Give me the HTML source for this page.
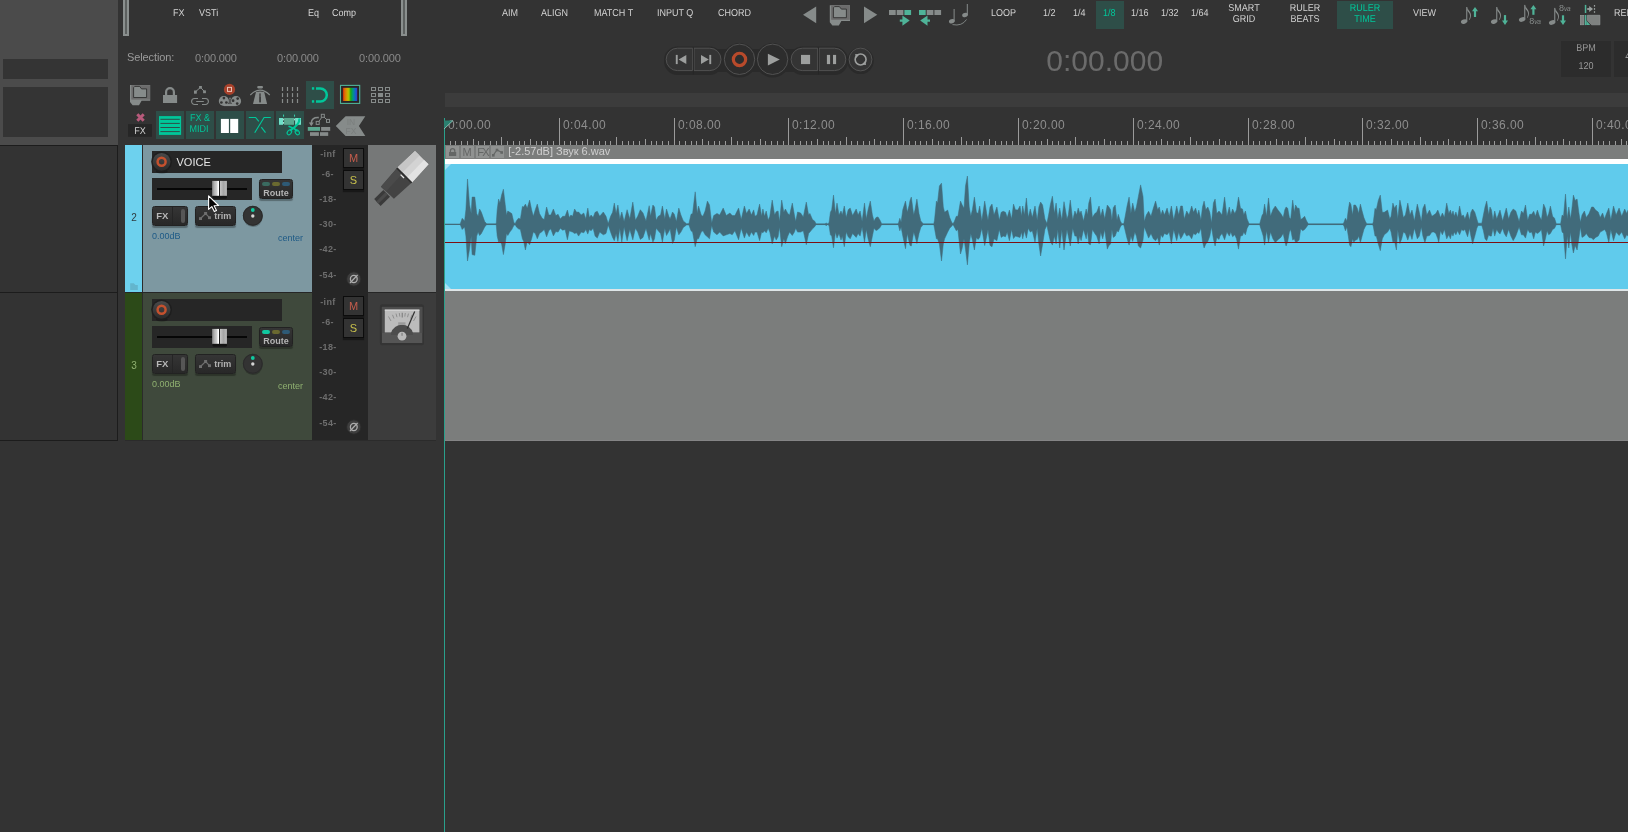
<!DOCTYPE html>
<html><head><meta charset="utf-8">
<style>
*{box-sizing:border-box;margin:0;padding:0}
html,body{width:1628px;height:832px;overflow:hidden;background:#333333;font-family:"Liberation Sans",sans-serif;}
.a{position:absolute}
.t{position:absolute;white-space:nowrap;line-height:1}
svg{position:absolute;overflow:visible}
</style></head><body>
<div id="root" class="a" style="left:0;top:0;width:1628px;height:832px;background:#333333;overflow:hidden;will-change:transform">

<!-- 10_left.py -->
<div class="a" style="left:0px;top:0px;width:118px;height:145px;background:#4b4b4b;"></div>
<div class="a" style="left:3px;top:59px;width:105px;height:20px;background:#343434;"></div>
<div class="a" style="left:3px;top:87px;width:105px;height:50px;background:#343434;"></div>
<div class="a" style="left:0px;top:145px;width:118px;height:1px;background:#1c1c1c;"></div>
<div class="a" style="left:117px;top:145px;width:1px;height:296px;background:#1c1c1c;"></div>
<div class="a" style="left:0px;top:292px;width:118px;height:1px;background:#1c1c1c;"></div>
<div class="a" style="left:0px;top:440px;width:118px;height:1px;background:#1c1c1c;"></div>
<div class="a" style="left:123px;top:0px;width:6px;height:36px;background:#8a8f8e;"></div>
<div class="a" style="left:125px;top:0px;width:2px;height:34px;background:#5c605f;"></div>
<div class="a" style="left:401px;top:0px;width:6px;height:36px;background:#8a8f8e;"></div>
<div class="a" style="left:403px;top:0px;width:2px;height:34px;background:#5c605f;"></div>
<div class="t" style="left:173px;top:9px;font-size:10px;color:#d6d6d6;text-rendering:geometricPrecision;transform:scaleX(0.9);transform-origin:0 0;">FX</div>
<div class="t" style="left:199px;top:9px;font-size:10px;color:#d6d6d6;text-rendering:geometricPrecision;transform:scaleX(0.9);transform-origin:0 0;">VSTi</div>
<div class="t" style="left:308px;top:9px;font-size:10px;color:#d6d6d6;text-rendering:geometricPrecision;transform:scaleX(0.9);transform-origin:0 0;">Eq</div>
<div class="t" style="left:332px;top:9px;font-size:10px;color:#d6d6d6;text-rendering:geometricPrecision;transform:scaleX(0.9);transform-origin:0 0;">Comp</div>
<div class="t" style="left:127px;top:52px;font-size:11px;color:#9a9a9a;letter-spacing:-0.11px">Selection:</div>
<div class="t" style="left:195px;top:53px;font-size:11px;color:#8a8a8a;letter-spacing:-0.12px">0:00.000</div>
<div class="t" style="left:277px;top:53px;font-size:11px;color:#8a8a8a;letter-spacing:-0.12px">0:00.000</div>
<div class="t" style="left:359px;top:53px;font-size:11px;color:#8a8a8a;letter-spacing:-0.12px">0:00.000</div>
<!-- 20_icons.py -->
<div class="a" style="left:306px;top:81px;width:28px;height:28px;background:#2e4e48;"></div>
<div class="a" style="left:156px;top:111px;width:28px;height:28px;background:#2e4e48;"></div>
<div class="a" style="left:186px;top:111px;width:28px;height:28px;background:#2e4e48;"></div>
<div class="a" style="left:216px;top:111px;width:28px;height:28px;background:#2e4e48;"></div>
<div class="a" style="left:246px;top:111px;width:28px;height:28px;background:#2e4e48;"></div>
<div class="a" style="left:276px;top:111px;width:28px;height:28px;background:#2e4e48;"></div>
<svg style="left:0px;top:0px" width="1628" height="832" viewBox="0 0 1628 832" ><path d="M130 85 H150.2 V100.8 H141.6 L139 105.2 H132.6 L130 102 Z" fill="#868b8a"/><rect x="131.3" y="85.2" width="18.7" height="14.4" fill="#6c6c6c"/><path d="M133.6 97.5 V87.6 L134.8 86.4 H139.6 L141.6 88.9 H146.6 V97.5 Z" fill="#868b8a" stroke="#303030" stroke-width="0.9"/><rect x="163" y="95" width="14.1" height="8" fill="#868b8a"/><path d="M166.1 95.5 V92 a3.9 3.9 0 0 1 7.8 0 V95.5" fill="none" stroke="#868b8a" stroke-width="2.2"/><path d="M195.3 92 L200.5 87.3 L204.5 91.7" fill="none" stroke="#868b8a" stroke-width="1"/><rect x="199.1" y="86" width="2.8" height="2.7" fill="#868b8a"/><rect x="194" y="90.5" width="2.8" height="3.2" fill="#868b8a"/><rect x="203.1" y="90.4" width="2.8" height="2.8" fill="#868b8a"/><path d="M198 98.5 H194.6 a3 3 0 0 0 0 6 H198 M202 98.5 H205.4 a3 3 0 0 1 0 6 H202 M196.2 101.5 H203.8" fill="none" stroke="#868b8a" stroke-width="1.1"/><circle cx="229.5" cy="89.4" r="5.6" fill="#a8412b"/><rect x="227.5" y="87.4" width="4" height="4" fill="none" stroke="#e9c2b6" stroke-width="1"/><circle cx="223.9" cy="101" r="5.1" fill="#868b8a"/><circle cx="236" cy="101" r="5.1" fill="#868b8a"/><rect x="223.9" y="103.9" width="12.1" height="2.2" fill="#868b8a"/><rect x="229.6" y="98.2" width="0.8" height="6" fill="#868b8a"/><rect x="229" y="97.8" width="2" height="0.7" fill="#868b8a"/><circle cx="223.9" cy="98.1" r="1.35" fill="#333"/><circle cx="226.4" cy="102.5" r="1.35" fill="#333"/><circle cx="221.4" cy="102.5" r="1.35" fill="#333"/><circle cx="237.7" cy="98.6" r="1.35" fill="#333"/><circle cx="237.2" cy="103.6" r="1.35" fill="#333"/><circle cx="233.1" cy="100.7" r="1.35" fill="#333"/><rect x="257.2" y="86" width="5.8" height="2.4" rx="1.1" fill="#868b8a"/><path d="M250.3 95 Q260 85.2 269.8 95" fill="none" stroke="#868b8a" stroke-width="1.1"/><path d="M256 92 Q260 90.8 264.2 92 L267.1 103.9 H253 Z" fill="#868b8a"/><rect x="259.3" y="93.6" width="1.5" height="8.8" fill="#2c2c2c"/><rect x="259.3" y="93.6" width="1.5" height="3.5" fill="#555"/><rect x="281.9" y="87.0" width="1.2" height="4" fill="#868b8a"/><rect x="281.9" y="93.1" width="1.2" height="4" fill="#868b8a"/><rect x="281.9" y="99.0" width="1.2" height="4" fill="#868b8a"/><rect x="286.9" y="87.0" width="1.2" height="4" fill="#868b8a"/><rect x="286.9" y="93.1" width="1.2" height="4" fill="#868b8a"/><rect x="286.9" y="99.0" width="1.2" height="4" fill="#868b8a"/><rect x="291.9" y="87.0" width="1.2" height="4" fill="#868b8a"/><rect x="291.9" y="93.1" width="1.2" height="4" fill="#868b8a"/><rect x="291.9" y="99.0" width="1.2" height="4" fill="#868b8a"/><rect x="296.9" y="87.0" width="1.2" height="4" fill="#868b8a"/><rect x="296.9" y="93.1" width="1.2" height="4" fill="#868b8a"/><rect x="296.9" y="99.0" width="1.2" height="4" fill="#868b8a"/><rect x="311.9" y="87.2" width="2.3" height="2.5" fill="#00c79a"/><rect x="311.9" y="100.2" width="2.3" height="2.5" fill="#00c79a"/><path d="M316 88.45 H320.3 a6.5 6.5 0 0 1 0 13 H316" fill="none" stroke="#00c79a" stroke-width="2.5"/><defs><linearGradient id="spec" x1="0" x2="1" y1="0" y2="0"><stop offset="0" stop-color="#c82810"/><stop offset="0.12" stop-color="#e06a05"/><stop offset="0.3" stop-color="#d0a800"/><stop offset="0.42" stop-color="#a8c400"/><stop offset="0.55" stop-color="#18a818"/><stop offset="0.72" stop-color="#00948c"/><stop offset="0.88" stop-color="#1860c8"/><stop offset="1" stop-color="#3838d0"/></linearGradient></defs><rect x="340.5" y="85.4" width="19.2" height="18" fill="#2b2224" stroke="#4fb398" stroke-width="1.1"/><rect x="342.9" y="87.8" width="14.3" height="13.2" fill="url(#spec)"/><rect x="371.5" y="87.5" width="4" height="3" fill="none" stroke="#868b8a" stroke-width="1"/><rect x="371.5" y="93.5" width="4" height="3" fill="none" stroke="#868b8a" stroke-width="1"/><rect x="371.5" y="99.5" width="4" height="3" fill="none" stroke="#868b8a" stroke-width="1"/><rect x="378.5" y="87.5" width="4" height="3" fill="none" stroke="#868b8a" stroke-width="1"/><rect x="378" y="93" width="5" height="4" fill="#868b8a"/><rect x="378.5" y="99.5" width="4" height="3" fill="none" stroke="#868b8a" stroke-width="1"/><rect x="385.5" y="87.5" width="4" height="3" fill="none" stroke="#868b8a" stroke-width="1"/><rect x="385.5" y="93.5" width="4" height="3" fill="none" stroke="#868b8a" stroke-width="1"/><rect x="385.5" y="99.5" width="4" height="3" fill="none" stroke="#868b8a" stroke-width="1"/><path d="M137.3 114.3 L143.7 120.7 M143.7 114.3 L137.3 120.7" stroke="#b85a7b" stroke-width="3" fill="none"/><rect x="128" y="124.1" width="24" height="12.7" fill="#262626"/><rect x="159" y="116.1" width="22.1" height="18.8" fill="#00c79a"/><rect x="160.4" y="118.8" width="19.4" height="1" fill="#2e4e48"/><rect x="160.4" y="122.9" width="19.4" height="1" fill="#2e4e48"/><rect x="160.4" y="127.0" width="19.4" height="1" fill="#2e4e48"/><rect x="160.4" y="131.1" width="19.4" height="1" fill="#2e4e48"/><rect x="220.9" y="118.9" width="8" height="14.1" fill="#ffffff"/><rect x="230.2" y="118.9" width="8" height="14.1" fill="#ffffff"/><path d="M248.8 117.5 H255.6 L258.8 121.4 M261.3 127.2 L265.5 132.7 M270.8 117.5 H264.1 L254.7 132.7" fill="none" stroke="#00c79a" stroke-width="1.15"/><rect x="279" y="118" width="4" height="6.8" fill="#6fe0c9"/><rect x="284.1" y="118" width="9.9" height="6.8" fill="#5aa890"/><rect x="295.1" y="118" width="5.9" height="6.8" fill="#6fe0c9"/><path d="M283.55 114.6 V116.7 M294.55 114.6 V116.7" stroke="#38d4b0" stroke-width="1" fill="none"/><path d="M283.55 118.6 V120.4 M283.55 122 V123.8 M294.55 118.6 V120.4" stroke="#bff3e8" stroke-width="0.9" fill="none"/><path d="M299.3 119.3 C299.6 123 296 126.5 290.5 130.2" fill="none" stroke="#00c79a" stroke-width="2.2" stroke-linecap="round"/><path d="M289.2 126.5 C292.5 127.6 295.5 129.3 297 130.8" fill="none" stroke="#00c79a" stroke-width="1.8" stroke-linecap="round"/><ellipse cx="289.4" cy="132.3" rx="1.9" ry="2.7" transform="rotate(38 289.4 132.3)" fill="none" stroke="#00c79a" stroke-width="1.1"/><ellipse cx="297.3" cy="132.4" rx="1.9" ry="2.6" transform="rotate(-32 297.3 132.4)" fill="none" stroke="#00c79a" stroke-width="1.1"/><path d="M318.8 117.6 C313.8 117.2 311.2 119.5 311.3 123" fill="none" stroke="#868b8a" stroke-width="1.6"/><path d="M308.8 122.6 L311.3 126.2 L313.8 122.6 Z" fill="#868b8a"/><path d="M317.9 122.8 L322.8 115.9 L328 120.9" fill="none" stroke="#868b8a" stroke-width="1"/><rect x="321.3" y="114.3" width="3" height="3" fill="#333" stroke="#868b8a" stroke-width="1"/><rect x="316.2" y="121.4" width="3" height="3" fill="#333" stroke="#868b8a" stroke-width="1"/><rect x="326.5" y="119.4" width="3" height="3" fill="#333" stroke="#868b8a" stroke-width="1"/><rect x="307.8" y="127" width="12.2" height="3.8" fill="#5aa890"/><rect x="321.1" y="127" width="9.1" height="3.8" fill="#868b8a"/><rect x="310" y="132.2" width="8.9" height="3.7" fill="#868b8a"/><rect x="320" y="132.2" width="8.2" height="3.7" fill="#868b8a"/><path d="M335.8 126 L345.6 116.3 H365.3 L358.9 126 L365.3 136 H345.6 Z" fill="#868b8a"/></svg>
<div class="t" style="left:140px;top:127px;width:200px;margin-left:-100px;text-align:center;font-size:10px;color:#d2d2d2;text-rendering:geometricPrecision;transform:scaleX(0.9);transform-origin:50% 0;">FX</div>
<div class="t" style="left:200px;top:114.1px;width:200px;margin-left:-100px;text-align:center;font-size:10px;color:#00c79a;text-rendering:geometricPrecision;transform:scaleX(0.9);transform-origin:50% 0;">FX &amp;</div>
<div class="t" style="left:199.4px;top:125px;width:200px;margin-left:-100px;text-align:center;font-size:10px;color:#00c79a;text-rendering:geometricPrecision;transform:scaleX(0.9);transform-origin:50% 0;">MIDI</div>
<div class="t" style="left:351px;top:118.3px;width:200px;margin-left:-100px;text-align:center;font-size:8.5px;color:#7a7e7d;">IN</div>
<div class="t" style="left:351px;top:127.2px;width:200px;margin-left:-100px;text-align:center;font-size:8.5px;color:#7a7e7d;">FX</div>
<!-- 30_topbar.py -->
<div class="t" style="left:501.6px;top:9px;font-size:10px;color:#d2d2d2;text-rendering:geometricPrecision;transform:scaleX(0.9);transform-origin:0 0;">AIM</div>
<div class="t" style="left:540.7px;top:9px;font-size:10px;color:#d2d2d2;text-rendering:geometricPrecision;transform:scaleX(0.9);transform-origin:0 0;">ALIGN</div>
<div class="t" style="left:594.4px;top:9px;font-size:10px;color:#d2d2d2;text-rendering:geometricPrecision;transform:scaleX(0.9);transform-origin:0 0;">MATCH T</div>
<div class="t" style="left:656.6px;top:9px;font-size:10px;color:#d2d2d2;text-rendering:geometricPrecision;transform:scaleX(0.9);transform-origin:0 0;">INPUT Q</div>
<div class="t" style="left:718.4px;top:9px;font-size:10px;color:#d2d2d2;text-rendering:geometricPrecision;transform:scaleX(0.9);transform-origin:0 0;">CHORD</div>
<div class="t" style="left:991.4px;top:9px;font-size:10px;color:#d2d2d2;text-rendering:geometricPrecision;transform:scaleX(0.9);transform-origin:0 0;">LOOP</div>
<div class="t" style="left:1043.2px;top:9px;font-size:10px;color:#d2d2d2;text-rendering:geometricPrecision;transform:scaleX(0.9);transform-origin:0 0;">1/2</div>
<div class="t" style="left:1073.2px;top:9px;font-size:10px;color:#d2d2d2;text-rendering:geometricPrecision;transform:scaleX(0.9);transform-origin:0 0;">1/4</div>
<div class="a" style="left:1096px;top:1px;width:28px;height:28px;background:#2e4e48;"></div>
<div class="t" style="left:1103px;top:9px;font-size:10px;color:#00c79a;text-rendering:geometricPrecision;transform:scaleX(0.9);transform-origin:0 0;">1/8</div>
<div class="t" style="left:1131px;top:9px;font-size:10px;color:#d2d2d2;text-rendering:geometricPrecision;transform:scaleX(0.9);transform-origin:0 0;">1/16</div>
<div class="t" style="left:1161px;top:9px;font-size:10px;color:#d2d2d2;text-rendering:geometricPrecision;transform:scaleX(0.9);transform-origin:0 0;">1/32</div>
<div class="t" style="left:1191px;top:9px;font-size:10px;color:#d2d2d2;text-rendering:geometricPrecision;transform:scaleX(0.9);transform-origin:0 0;">1/64</div>
<div class="t" style="left:1244px;top:4.4px;width:200px;margin-left:-100px;text-align:center;font-size:10px;color:#d2d2d2;text-rendering:geometricPrecision;transform:scaleX(0.9);transform-origin:50% 0;">SMART</div>
<div class="t" style="left:1244px;top:15.2px;width:200px;margin-left:-100px;text-align:center;font-size:10px;color:#d2d2d2;text-rendering:geometricPrecision;transform:scaleX(0.9);transform-origin:50% 0;">GRID</div>
<div class="t" style="left:1304.5px;top:4.4px;width:200px;margin-left:-100px;text-align:center;font-size:10px;color:#d2d2d2;text-rendering:geometricPrecision;transform:scaleX(0.9);transform-origin:50% 0;">RULER</div>
<div class="t" style="left:1304.5px;top:15.2px;width:200px;margin-left:-100px;text-align:center;font-size:10px;color:#d2d2d2;text-rendering:geometricPrecision;transform:scaleX(0.9);transform-origin:50% 0;">BEATS</div>
<div class="a" style="left:1337px;top:1px;width:56px;height:28px;background:#2e4e48;"></div>
<div class="t" style="left:1365px;top:4.4px;width:200px;margin-left:-100px;text-align:center;font-size:10px;color:#00c79a;text-rendering:geometricPrecision;transform:scaleX(0.9);transform-origin:50% 0;">RULER</div>
<div class="t" style="left:1365px;top:15.2px;width:200px;margin-left:-100px;text-align:center;font-size:10px;color:#00c79a;text-rendering:geometricPrecision;transform:scaleX(0.9);transform-origin:50% 0;">TIME</div>
<div class="t" style="left:1412.6px;top:9px;font-size:10px;color:#d2d2d2;text-rendering:geometricPrecision;transform:scaleX(0.9);transform-origin:0 0;">VIEW</div>
<div class="t" style="left:1614.3px;top:9px;font-size:10px;color:#d2d2d2;text-rendering:geometricPrecision;transform:scaleX(0.9);transform-origin:0 0;">REI</div>
<svg style="left:0px;top:0px" width="1628" height="832" viewBox="0 0 1628 832" ><polygon points="803,14.8 816.2,6.6 816.2,23.3" fill="#868b8a"/><polygon points="864,6.6 877.3,14.8 864,23.3" fill="#868b8a"/><g transform="translate(699.8 -79.8)"><path d="M130 85 H150.2 V100.8 H141.6 L139 105.2 H132.6 L130 102 Z" fill="#868b8a"/><rect x="131.3" y="85.2" width="18.7" height="14.4" fill="#6c6c6c"/><path d="M133.6 97.5 V87.6 L134.8 86.4 H139.6 L141.6 88.9 H146.6 V97.5 Z" fill="#868b8a" stroke="#303030" stroke-width="0.9"/></g><rect x="889.0" y="10" width="6.7" height="5" fill="#868b8a"/><rect x="896.7" y="10" width="6.7" height="5" fill="#868b8a"/><rect x="904.4" y="10" width="6.7" height="5" fill="#4fb398"/><path d="M899.8 20.6 H904 M903.5 17.6 L907.8 20.6 L903.5 23.6 Z" fill="#4fb398" stroke="#4fb398" stroke-width="2.2" stroke-linejoin="miter"/><rect x="919.0" y="10" width="6.7" height="5" fill="#4fb398"/><rect x="926.7" y="10" width="6.7" height="5" fill="#868b8a"/><rect x="934.4" y="10" width="6.7" height="5" fill="#868b8a"/><path d="M930 20.6 H926 M926.4 17.6 L922.1 20.6 L926.4 23.6 Z" fill="#4fb398" stroke="#4fb398" stroke-width="2.2"/><ellipse cx="951.8" cy="21.3" rx="2.9" ry="2.1" transform="rotate(-20 951.8 21.3)" fill="#868b8a"/><rect x="953.6" y="9" width="1" height="12.5" fill="#868b8a"/><ellipse cx="965" cy="15" rx="2.9" ry="2.1" transform="rotate(-20 965 15)" fill="#868b8a"/><rect x="966.8" y="4" width="1" height="11.2" fill="#868b8a"/><path d="M952.5 24.6 Q962 26.5 966.5 19.5" fill="none" stroke="#868b8a" stroke-width="0.9"/><ellipse cx="1464.1" cy="21.6" rx="3.25" ry="2.2" transform="rotate(-18 1464.1 21.6)" fill="#868b8a"/><rect x="1466.2" y="7.0" width="1.1" height="14.6" fill="#868b8a"/><path d="M1467.2 7.0 C1467.5 10.0 1471.3 12.0 1471.0 15.4 C1470.9 17.3 1470.2 19.0 1469.4 20.1 L1468.9 19.6 C1469.5 18.6 1470.1 17.2 1470.0 15.6 C1470.0 13.6 1468.2 12.2 1467.2 10.6 Z" fill="#868b8a"/><rect x="1473.9" y="10.0" width="2.2" height="7.0" fill="#4fb398"/><polygon points="1472.0,11.3 1475.0,7.0 1478.0,11.3" fill="#4fb398"/><ellipse cx="1494.1" cy="21.6" rx="3.25" ry="2.2" transform="rotate(-18 1494.1 21.6)" fill="#868b8a"/><rect x="1496.2" y="7.0" width="1.1" height="14.6" fill="#868b8a"/><path d="M1497.2 7.0 C1497.5 10.0 1501.3 12.0 1501.0 15.4 C1500.9 17.3 1500.2 19.0 1499.4 20.1 L1498.9 19.6 C1499.5 18.6 1500.1 17.2 1500.0 15.6 C1500.0 13.6 1498.2 12.2 1497.2 10.6 Z" fill="#868b8a"/><rect x="1503.9" y="15.1" width="2.2" height="6.8" fill="#4fb398"/><polygon points="1502.0,20.6 1505.0,24.9 1508.0,20.6" fill="#4fb398"/><ellipse cx="1522.1" cy="19.5" rx="3.25" ry="2.2" transform="rotate(-18 1522.1 19.5)" fill="#868b8a"/><rect x="1524.2" y="4.9" width="1.1" height="14.6" fill="#868b8a"/><path d="M1525.2 4.9 C1525.5 7.9 1529.3 9.9 1529.0 13.3 C1528.9 15.2 1528.2 16.9 1527.4 18.0 L1526.9 17.5 C1527.5 16.5 1528.1 15.1 1528.0 13.5 C1528.0 11.5 1526.2 10.1 1525.2 8.5 Z" fill="#868b8a"/><rect x="1532.3" y="7.9" width="2.2" height="6.9" fill="#4fb398"/><polygon points="1530.4,9.2 1533.4,4.9 1536.4,9.2" fill="#4fb398"/><ellipse cx="1552.1" cy="22.5" rx="3.25" ry="2.2" transform="rotate(-18 1552.1 22.5)" fill="#868b8a"/><rect x="1554.2" y="7.9" width="1.1" height="14.6" fill="#868b8a"/><path d="M1555.2 7.9 C1555.5 10.9 1559.3 12.9 1559.0 16.3 C1558.9 18.2 1558.2 19.9 1557.4 21.0 L1556.9 20.5 C1557.5 19.5 1558.1 18.1 1558.0 16.5 C1558.0 14.5 1556.2 13.1 1555.2 11.5 Z" fill="#868b8a"/><rect x="1561.9" y="15.3" width="2.2" height="6.6" fill="#4fb398"/><polygon points="1560.0,20.6 1563.0,24.9 1566.0,20.6" fill="#4fb398"/><rect x="1580.3" y="15.3" width="3.6" height="9.5" fill="#7e8180" stroke="#9aa09f" stroke-width="0.6"/><polygon points="1587.3,15.3 1599.9,15.3 1599.9,24.8 1591.6,24.8 1587.3,20.5" fill="#7e8180" stroke="#9aa09f" stroke-width="0.6"/><rect x="1584.8" y="4.9" width="1.5" height="8.1" fill="#4fb398"/><rect x="1584.8" y="15" width="1.5" height="10.1" fill="#4fb398"/><polygon points="1586.3,20.6 1586.3,25.1 1590.2,25.1" fill="#4fb398"/><rect x="1587.2" y="8.1" width="2.8" height="1.8" fill="#9aa09f"/><polygon points="1589.2,6.1 1593,9 1589.2,11.9" fill="#9aa09f"/><rect x="1593.9" y="5" width="1.2" height="1.7" fill="#9aa09f"/><rect x="1593.9" y="8.1" width="1.2" height="1.7" fill="#9aa09f"/><rect x="1593.9" y="11.2" width="1.2" height="1.6" fill="#9aa09f"/></svg>
<div class="t" style="left:1529.2px;top:17.3px;font-size:9px;color:#868b8a;">8<span style="font-size:6.5px;font-style:italic;letter-spacing:-0.3px">va</span></div>
<div class="t" style="left:1559px;top:4.1px;font-size:9px;color:#868b8a;">8<span style="font-size:6.5px;font-style:italic;letter-spacing:-0.3px">va</span></div>
<svg style="left:0px;top:0px" width="1628" height="832" viewBox="0 0 1628 832" ><g fill="#2a2a2a"><rect x="664" y="46.5" width="59" height="28.5" rx="13.5"/><circle cx="739.5" cy="60.3" r="17.2"/><circle cx="772.6" cy="60.3" r="17.2"/><rect x="789" y="46.5" width="59" height="28.5" rx="13.5"/><circle cx="860.5" cy="60.8" r="13.3"/><rect x="715" y="49" width="85" height="23"/></g><path d="M677.4 48.2 H692.6 V70.6 H677.4 A11.2 11.2 0 0 1 677.4 48.2 Z" fill="#343434" stroke="#565656" stroke-width="0.9"/><path d="M694.0 48.2 H709.8 A11.2 11.2 0 0 1 709.8 70.6 H694.0 Z" fill="#343434" stroke="#565656" stroke-width="0.9"/><rect x="692.9" y="48" width="0.8" height="26.5" fill="#262626"/><path d="M802.3 48.2 H817.7 V70.6 H802.3 A11.2 11.2 0 0 1 802.3 48.2 Z" fill="#343434" stroke="#565656" stroke-width="0.9"/><path d="M819.1 48.2 H834.6 A11.2 11.2 0 0 1 834.6 70.6 H819.1 Z" fill="#343434" stroke="#565656" stroke-width="0.9"/><rect x="818.0" y="48" width="0.8" height="26.5" fill="#262626"/><circle cx="739.5" cy="59.3" r="15.2" fill="#2d2d2d" stroke="#565656" stroke-width="0.9"/><circle cx="772.6" cy="59.3" r="15.2" fill="#2d2d2d" stroke="#565656" stroke-width="0.9"/><circle cx="860.5" cy="59.5" r="11.4" fill="#343434" stroke="#565656" stroke-width="0.9"/><rect x="675.8" y="54.9" width="1.9" height="9.2" fill="#9d9f9e"/><polygon points="678.6,59.5 686.3,54.9 686.3,64.1" fill="#9d9f9e"/><polygon points="701,54.9 708.8,59.5 701,64.1" fill="#9d9f9e"/><rect x="709.3" y="54.9" width="1.9" height="9.2" fill="#9d9f9e"/><circle cx="739.5" cy="59.4" r="6.15" fill="none" stroke="#b84a2b" stroke-width="3.2"/><polygon points="767.9,53.7 779.8,59.5 767.9,65.4" fill="#9d9f9e"/><rect x="801" y="54.9" width="9.1" height="9.2" fill="#9d9f9e"/><rect x="826.9" y="54.9" width="3.2" height="9.2" fill="#9d9f9e"/><rect x="833" y="54.9" width="3.1" height="9.2" fill="#9d9f9e"/><circle cx="860.6" cy="59.5" r="5.45" fill="none" stroke="#9d9f9e" stroke-width="1.6"/><polygon points="855.2,54 859.3,54.6 855.9,58.2" fill="#9d9f9e"/><polygon points="866,65 861.9,64.4 865.3,60.8" fill="#9d9f9e"/></svg>
<div class="t" style="left:1046.3px;top:45.5px;font-size:30px;color:#6b6b6b;">0:00.000</div>
<div class="a" style="left:1561px;top:41px;width:50px;height:36px;background:#2c2c2c;"></div>
<div class="a" style="left:1614px;top:41px;width:20px;height:36px;background:#2c2c2c;"></div>
<div class="t" style="left:1585.6px;top:44.1px;width:200px;margin-left:-100px;text-align:center;font-size:10px;color:#9a9a9a;text-rendering:geometricPrecision;transform:scaleX(0.9);transform-origin:50% 0;">BPM</div>
<div class="t" style="left:1585.6px;top:62.1px;width:200px;margin-left:-100px;text-align:center;font-size:10px;color:#9a9a9a;text-rendering:geometricPrecision;transform:scaleX(0.9);transform-origin:50% 0;">120</div>
<div class="t" style="left:1625.3px;top:52px;font-size:10px;color:#9a9a9a;">4/4</div>
<!-- 40_ruler.py -->
<div class="a" style="left:445px;top:93px;width:1183px;height:14px;background:#3c3c3c;"></div>
<svg style="left:445px;top:118px" width="1183" height="27" viewBox="0 0 1183 27" shape-rendering="crispEdges"><g fill="#9b9b9b"><rect x="-1" y="0" width="1" height="27"/><rect x="5" y="23" width="1" height="4"/><rect x="10" y="23" width="1" height="4"/><rect x="16" y="23" width="1" height="4"/><rect x="22" y="23" width="1" height="4"/><rect x="28" y="21" width="1" height="6"/><rect x="33" y="23" width="1" height="4"/><rect x="39" y="23" width="1" height="4"/><rect x="45" y="23" width="1" height="4"/><rect x="51" y="23" width="1" height="4"/><rect x="56" y="19" width="1" height="8"/><rect x="62" y="23" width="1" height="4"/><rect x="68" y="23" width="1" height="4"/><rect x="74" y="23" width="1" height="4"/><rect x="79" y="23" width="1" height="4"/><rect x="85" y="21" width="1" height="6"/><rect x="91" y="23" width="1" height="4"/><rect x="96" y="23" width="1" height="4"/><rect x="102" y="23" width="1" height="4"/><rect x="108" y="23" width="1" height="4"/><rect x="114" y="0" width="1" height="27"/><rect x="119" y="23" width="1" height="4"/><rect x="125" y="23" width="1" height="4"/><rect x="131" y="23" width="1" height="4"/><rect x="137" y="23" width="1" height="4"/><rect x="142" y="21" width="1" height="6"/><rect x="148" y="23" width="1" height="4"/><rect x="154" y="23" width="1" height="4"/><rect x="160" y="23" width="1" height="4"/><rect x="165" y="23" width="1" height="4"/><rect x="171" y="19" width="1" height="8"/><rect x="177" y="23" width="1" height="4"/><rect x="183" y="23" width="1" height="4"/><rect x="188" y="23" width="1" height="4"/><rect x="194" y="23" width="1" height="4"/><rect x="200" y="21" width="1" height="6"/><rect x="206" y="23" width="1" height="4"/><rect x="211" y="23" width="1" height="4"/><rect x="217" y="23" width="1" height="4"/><rect x="223" y="23" width="1" height="4"/><rect x="229" y="0" width="1" height="27"/><rect x="234" y="23" width="1" height="4"/><rect x="240" y="23" width="1" height="4"/><rect x="246" y="23" width="1" height="4"/><rect x="251" y="23" width="1" height="4"/><rect x="257" y="21" width="1" height="6"/><rect x="263" y="23" width="1" height="4"/><rect x="269" y="23" width="1" height="4"/><rect x="274" y="23" width="1" height="4"/><rect x="280" y="23" width="1" height="4"/><rect x="286" y="19" width="1" height="8"/><rect x="292" y="23" width="1" height="4"/><rect x="297" y="23" width="1" height="4"/><rect x="303" y="23" width="1" height="4"/><rect x="309" y="23" width="1" height="4"/><rect x="315" y="21" width="1" height="6"/><rect x="320" y="23" width="1" height="4"/><rect x="326" y="23" width="1" height="4"/><rect x="332" y="23" width="1" height="4"/><rect x="338" y="23" width="1" height="4"/><rect x="343" y="0" width="1" height="27"/><rect x="349" y="23" width="1" height="4"/><rect x="355" y="23" width="1" height="4"/><rect x="361" y="23" width="1" height="4"/><rect x="366" y="23" width="1" height="4"/><rect x="372" y="21" width="1" height="6"/><rect x="378" y="23" width="1" height="4"/><rect x="383" y="23" width="1" height="4"/><rect x="389" y="23" width="1" height="4"/><rect x="395" y="23" width="1" height="4"/><rect x="401" y="19" width="1" height="8"/><rect x="406" y="23" width="1" height="4"/><rect x="412" y="23" width="1" height="4"/><rect x="418" y="23" width="1" height="4"/><rect x="424" y="23" width="1" height="4"/><rect x="429" y="21" width="1" height="6"/><rect x="435" y="23" width="1" height="4"/><rect x="441" y="23" width="1" height="4"/><rect x="447" y="23" width="1" height="4"/><rect x="452" y="23" width="1" height="4"/><rect x="458" y="0" width="1" height="27"/><rect x="464" y="23" width="1" height="4"/><rect x="470" y="23" width="1" height="4"/><rect x="475" y="23" width="1" height="4"/><rect x="481" y="23" width="1" height="4"/><rect x="487" y="21" width="1" height="6"/><rect x="493" y="23" width="1" height="4"/><rect x="498" y="23" width="1" height="4"/><rect x="504" y="23" width="1" height="4"/><rect x="510" y="23" width="1" height="4"/><rect x="516" y="19" width="1" height="8"/><rect x="521" y="23" width="1" height="4"/><rect x="527" y="23" width="1" height="4"/><rect x="533" y="23" width="1" height="4"/><rect x="538" y="23" width="1" height="4"/><rect x="544" y="21" width="1" height="6"/><rect x="550" y="23" width="1" height="4"/><rect x="556" y="23" width="1" height="4"/><rect x="561" y="23" width="1" height="4"/><rect x="567" y="23" width="1" height="4"/><rect x="573" y="0" width="1" height="27"/><rect x="579" y="23" width="1" height="4"/><rect x="584" y="23" width="1" height="4"/><rect x="590" y="23" width="1" height="4"/><rect x="596" y="23" width="1" height="4"/><rect x="602" y="21" width="1" height="6"/><rect x="607" y="23" width="1" height="4"/><rect x="613" y="23" width="1" height="4"/><rect x="619" y="23" width="1" height="4"/><rect x="625" y="23" width="1" height="4"/><rect x="630" y="19" width="1" height="8"/><rect x="636" y="23" width="1" height="4"/><rect x="642" y="23" width="1" height="4"/><rect x="648" y="23" width="1" height="4"/><rect x="653" y="23" width="1" height="4"/><rect x="659" y="21" width="1" height="6"/><rect x="665" y="23" width="1" height="4"/><rect x="670" y="23" width="1" height="4"/><rect x="676" y="23" width="1" height="4"/><rect x="682" y="23" width="1" height="4"/><rect x="688" y="0" width="1" height="27"/><rect x="693" y="23" width="1" height="4"/><rect x="699" y="23" width="1" height="4"/><rect x="705" y="23" width="1" height="4"/><rect x="711" y="23" width="1" height="4"/><rect x="716" y="21" width="1" height="6"/><rect x="722" y="23" width="1" height="4"/><rect x="728" y="23" width="1" height="4"/><rect x="734" y="23" width="1" height="4"/><rect x="739" y="23" width="1" height="4"/><rect x="745" y="19" width="1" height="8"/><rect x="751" y="23" width="1" height="4"/><rect x="757" y="23" width="1" height="4"/><rect x="762" y="23" width="1" height="4"/><rect x="768" y="23" width="1" height="4"/><rect x="774" y="21" width="1" height="6"/><rect x="780" y="23" width="1" height="4"/><rect x="785" y="23" width="1" height="4"/><rect x="791" y="23" width="1" height="4"/><rect x="797" y="23" width="1" height="4"/><rect x="803" y="0" width="1" height="27"/><rect x="808" y="23" width="1" height="4"/><rect x="814" y="23" width="1" height="4"/><rect x="820" y="23" width="1" height="4"/><rect x="825" y="23" width="1" height="4"/><rect x="831" y="21" width="1" height="6"/><rect x="837" y="23" width="1" height="4"/><rect x="843" y="23" width="1" height="4"/><rect x="848" y="23" width="1" height="4"/><rect x="854" y="23" width="1" height="4"/><rect x="860" y="19" width="1" height="8"/><rect x="866" y="23" width="1" height="4"/><rect x="871" y="23" width="1" height="4"/><rect x="877" y="23" width="1" height="4"/><rect x="883" y="23" width="1" height="4"/><rect x="889" y="21" width="1" height="6"/><rect x="894" y="23" width="1" height="4"/><rect x="900" y="23" width="1" height="4"/><rect x="906" y="23" width="1" height="4"/><rect x="912" y="23" width="1" height="4"/><rect x="917" y="0" width="1" height="27"/><rect x="923" y="23" width="1" height="4"/><rect x="929" y="23" width="1" height="4"/><rect x="935" y="23" width="1" height="4"/><rect x="940" y="23" width="1" height="4"/><rect x="946" y="21" width="1" height="6"/><rect x="952" y="23" width="1" height="4"/><rect x="957" y="23" width="1" height="4"/><rect x="963" y="23" width="1" height="4"/><rect x="969" y="23" width="1" height="4"/><rect x="975" y="19" width="1" height="8"/><rect x="980" y="23" width="1" height="4"/><rect x="986" y="23" width="1" height="4"/><rect x="992" y="23" width="1" height="4"/><rect x="998" y="23" width="1" height="4"/><rect x="1003" y="21" width="1" height="6"/><rect x="1009" y="23" width="1" height="4"/><rect x="1015" y="23" width="1" height="4"/><rect x="1021" y="23" width="1" height="4"/><rect x="1026" y="23" width="1" height="4"/><rect x="1032" y="0" width="1" height="27"/><rect x="1038" y="23" width="1" height="4"/><rect x="1044" y="23" width="1" height="4"/><rect x="1049" y="23" width="1" height="4"/><rect x="1055" y="23" width="1" height="4"/><rect x="1061" y="21" width="1" height="6"/><rect x="1067" y="23" width="1" height="4"/><rect x="1072" y="23" width="1" height="4"/><rect x="1078" y="23" width="1" height="4"/><rect x="1084" y="23" width="1" height="4"/><rect x="1090" y="19" width="1" height="8"/><rect x="1095" y="23" width="1" height="4"/><rect x="1101" y="23" width="1" height="4"/><rect x="1107" y="23" width="1" height="4"/><rect x="1112" y="23" width="1" height="4"/><rect x="1118" y="21" width="1" height="6"/><rect x="1124" y="23" width="1" height="4"/><rect x="1130" y="23" width="1" height="4"/><rect x="1135" y="23" width="1" height="4"/><rect x="1141" y="23" width="1" height="4"/><rect x="1147" y="0" width="1" height="27"/><rect x="1153" y="23" width="1" height="4"/><rect x="1158" y="23" width="1" height="4"/><rect x="1164" y="23" width="1" height="4"/><rect x="1170" y="23" width="1" height="4"/><rect x="1176" y="21" width="1" height="6"/><rect x="1181" y="23" width="1" height="4"/></g></svg>
<div class="t" style="left:448px;top:119px;font-size:12px;color:#8e8e8e;letter-spacing:0.45px">0:00.00</div>
<div class="t" style="left:563px;top:119px;font-size:12px;color:#8e8e8e;letter-spacing:0.45px">0:04.00</div>
<div class="t" style="left:678px;top:119px;font-size:12px;color:#8e8e8e;letter-spacing:0.45px">0:08.00</div>
<div class="t" style="left:792px;top:119px;font-size:12px;color:#8e8e8e;letter-spacing:0.45px">0:12.00</div>
<div class="t" style="left:907px;top:119px;font-size:12px;color:#8e8e8e;letter-spacing:0.45px">0:16.00</div>
<div class="t" style="left:1022px;top:119px;font-size:12px;color:#8e8e8e;letter-spacing:0.45px">0:20.00</div>
<div class="t" style="left:1137px;top:119px;font-size:12px;color:#8e8e8e;letter-spacing:0.45px">0:24.00</div>
<div class="t" style="left:1252px;top:119px;font-size:12px;color:#8e8e8e;letter-spacing:0.45px">0:28.00</div>
<div class="t" style="left:1366px;top:119px;font-size:12px;color:#8e8e8e;letter-spacing:0.45px">0:32.00</div>
<div class="t" style="left:1481px;top:119px;font-size:12px;color:#8e8e8e;letter-spacing:0.45px">0:36.00</div>
<div class="t" style="left:1596px;top:119px;font-size:12px;color:#8e8e8e;letter-spacing:0.45px">0:40.00</div>
<div class="a" style="left:444px;top:118px;width:1.3px;height:714px;background:#2aa08c;"></div>
<svg style="left:444px;top:120px" width="10" height="10" viewBox="0 0 10 10" ><polygon points="0,0.5 9,0.5 0,9" fill="#2b8070"/><line x1="9" y1="0.5" x2="0" y2="9" stroke="#9ad0c5" stroke-width="0.8"/></svg>
<!-- 50_tracks.py -->
<div class="a" style="left:125px;top:145px;width:17px;height:147px;background:#6dd1ee;"></div>
<div class="a" style="left:143px;top:145px;width:169px;height:147px;background:#7d98a1;"></div>
<div class="a" style="left:142px;top:145px;width:1px;height:147px;background:#2b2b2b;"></div>
<div class="t" style="left:134px;top:212.5px;width:200px;margin-left:-100px;text-align:center;font-size:10px;color:#2f3b40;">2</div>
<div class="a" style="left:152px;top:151px;width:130px;height:22px;background:#262626;"></div>
<div class="t" style="left:176.5px;top:156.5px;font-size:11px;color:#e6e6e6;">VOICE</div>
<svg style="left:150px;top:150px" width="26" height="28" viewBox="0 0 26 28" ><defs><linearGradient id="rg2" x1="0" x2="0" y1="0" y2="1"><stop offset="0" stop-color="#4a4a4a"/><stop offset="1" stop-color="#2b2b2b"/></linearGradient></defs><ellipse cx="11.8" cy="21.5" rx="6" ry="2.2" fill="rgba(0,0,0,0.22)"/><circle cx="11.6" cy="11.8" r="10.4" fill="#1e1e1e"/><circle cx="11.6" cy="11.8" r="8.9" fill="url(#rg2)"/><circle cx="11.6" cy="11.8" r="4" fill="none" stroke="#c4512e" stroke-width="2.5"/></svg>
<div class="a" style="left:152px;top:178px;width:100px;height:22px;background:#262626;"></div>
<div class="a" style="left:157px;top:188px;width:90px;height:2px;background:#060606;"></div>
<svg style="left:208px;top:179px" width="24" height="24" viewBox="0 0 24 24" ><defs><linearGradient id="fgl2" x1="0" x2="1" y1="0" y2="0"><stop offset="0" stop-color="#858585"/><stop offset="0.35" stop-color="#b4b4b4"/><stop offset="0.75" stop-color="#d6d6d6"/><stop offset="0.8" stop-color="#ffffff"/><stop offset="1" stop-color="#ffffff"/></linearGradient><linearGradient id="fgr2" x1="0" x2="1" y1="0" y2="0"><stop offset="0" stop-color="#c6c6c6"/><stop offset="0.5" stop-color="#a6a6a6"/><stop offset="1" stop-color="#bcbcbc"/></linearGradient></defs><rect x="4.5" y="16.5" width="14.5" height="3.3" rx="1.5" fill="rgba(0,0,0,0.45)"/><rect x="4.1" y="1.9" width="7" height="14.9" fill="url(#fgl2)"/><rect x="11.1" y="1.9" width="0.9" height="14.9" fill="#1e1e1e"/><rect x="12" y="1.9" width="6.9" height="14.9" fill="url(#fgr2)"/></svg>
<div class="a" style="left:259px;top:179px;width:34px;height:20px;background:linear-gradient(#353535,#282828);border-radius:2.5px;border:1px solid #222;box-shadow:0 1.5px 1px rgba(0,0,0,0.3)"></div>
<div class="a" style="left:262px;top:182.1px;width:8px;height:3.9px;background:#3a6b60;border-radius:2px"></div>
<div class="a" style="left:272px;top:182.1px;width:8px;height:3.9px;background:#6a6930;border-radius:2px"></div>
<div class="a" style="left:282px;top:182.1px;width:8px;height:3.9px;background:#2e5a76;border-radius:2px"></div>
<div class="t" style="left:263.3px;top:189px;font-size:9px;color:#b4b4b4;font-weight:bold">Route</div>
<div class="a" style="left:152px;top:206px;width:36px;height:20px;background:linear-gradient(#353535,#282828);border-radius:2.5px;border:1px solid #222;box-shadow:0 1.5px 1px rgba(0,0,0,0.3)"></div>
<div class="a" style="left:172px;top:207px;width:1px;height:18px;background:#252525;"></div>
<div class="a" style="left:181px;top:209px;width:3.6px;height:14px;background:#565656;border-radius:2px"></div>
<div class="t" style="left:156.3px;top:211.2px;font-size:9.5px;color:#b8b8b8;font-weight:bold">FX</div>
<div class="a" style="left:195px;top:206px;width:41px;height:20px;background:linear-gradient(#353535,#282828);border-radius:2.5px;border:1px solid #222;box-shadow:0 1.5px 1px rgba(0,0,0,0.3)"></div>
<svg style="left:197px;top:209px" width="16" height="14" viewBox="0 0 16 14" ><path d="M3.5 9.5 L8.6 4.5 L12.5 8.6" fill="none" stroke="#6e6e6e" stroke-width="1.2"/><rect x="2" y="8.2" width="3" height="2.8" fill="#6e6e6e"/><rect x="7.1" y="3" width="3" height="3" fill="#6e6e6e"/><rect x="11" y="7.3" width="3" height="2.8" fill="#6e6e6e"/></svg>
<div class="t" style="left:214.3px;top:212px;font-size:9px;color:#b2b2b2;font-weight:bold">trim</div>
<svg style="left:241px;top:204px" width="24" height="26" viewBox="0 0 24 26" ><ellipse cx="12" cy="13.5" rx="9.5" ry="9.5" fill="rgba(0,0,0,0.25)"/><circle cx="11.8" cy="11.8" r="10" fill="#333333"/><circle cx="11.8" cy="11.8" r="9.4" fill="none" stroke="#2a2a2a" stroke-width="1"/><circle cx="11.8" cy="6" r="1.9" fill="#10c9a0"/><circle cx="11.8" cy="12" r="1.7" fill="#d4d4d4"/></svg>
<div class="t" style="left:152px;top:232px;font-size:9px;color:#1d5a86;">0.00dB</div>
<div class="t" style="left:278px;top:234px;font-size:9px;color:#1d5a86;">center</div>
<div class="a" style="left:312px;top:145px;width:56px;height:147px;background:#262626;"></div>
<div class="t" style="left:327.9px;top:149.5px;width:200px;margin-left:-100px;text-align:center;font-size:9px;color:#6e6e6e;font-weight:bold;letter-spacing:0.35px">-inf</div>
<div class="t" style="left:327.9px;top:169.5px;width:200px;margin-left:-100px;text-align:center;font-size:9px;color:#6e6e6e;font-weight:bold;letter-spacing:0.35px">-6-</div>
<div class="t" style="left:327.9px;top:194.5px;width:200px;margin-left:-100px;text-align:center;font-size:9px;color:#6e6e6e;font-weight:bold;letter-spacing:0.35px">-18-</div>
<div class="t" style="left:327.9px;top:219.5px;width:200px;margin-left:-100px;text-align:center;font-size:9px;color:#6e6e6e;font-weight:bold;letter-spacing:0.35px">-30-</div>
<div class="t" style="left:327.9px;top:244.5px;width:200px;margin-left:-100px;text-align:center;font-size:9px;color:#6e6e6e;font-weight:bold;letter-spacing:0.35px">-42-</div>
<div class="t" style="left:327.9px;top:270.5px;width:200px;margin-left:-100px;text-align:center;font-size:9px;color:#6e6e6e;font-weight:bold;letter-spacing:0.35px">-54-</div>
<div class="a" style="left:343px;top:148px;width:21px;height:20px;background:#333333;border:1px solid #0c0c0c;box-shadow:0 2px 1px rgba(0,0,0,0.35)"></div>
<div class="t" style="left:353.5px;top:152.5px;width:200px;margin-left:-100px;text-align:center;font-size:11px;color:#c45c4c;">M</div>
<div class="a" style="left:343px;top:170px;width:21px;height:20px;background:#333333;border:1px solid #0c0c0c;box-shadow:0 2px 1px rgba(0,0,0,0.35)"></div>
<div class="t" style="left:353.5px;top:174.5px;width:200px;margin-left:-100px;text-align:center;font-size:11px;color:#c8c04c;">S</div>
<svg style="left:345px;top:270px" width="18" height="18" viewBox="0 0 18 18" ><circle cx="8.8" cy="9" r="7.2" fill="#3e3e3e" stroke="#2a2a2a" stroke-width="1"/><ellipse cx="8.8" cy="9" rx="3.4" ry="3.6" fill="none" stroke="#aeaeae" stroke-width="1.3"/><line x1="5" y1="13" x2="12.6" y2="5" stroke="#aeaeae" stroke-width="1.2"/></svg>
<div class="a" style="left:368px;top:145px;width:68px;height:147px;background:#767878;"></div>
<div class="a" style="left:125px;top:292px;width:311px;height:1px;background:#262626;"></div>
<div class="a" style="left:125px;top:440px;width:311px;height:1px;background:#2b2b2b;"></div>
<div class="a" style="left:125px;top:293px;width:17px;height:147px;background:#2c4a18;"></div>
<div class="a" style="left:143px;top:293px;width:169px;height:147px;background:#3f493c;"></div>
<div class="a" style="left:142px;top:293px;width:1px;height:147px;background:#2b2b2b;"></div>
<div class="t" style="left:134px;top:360.5px;width:200px;margin-left:-100px;text-align:center;font-size:10px;color:#8fb070;">3</div>
<div class="a" style="left:152px;top:299px;width:130px;height:22px;background:#262626;"></div>
<div class="t" style="left:176.5px;top:304.5px;font-size:11px;color:#e6e6e6;"></div>
<svg style="left:150px;top:298px" width="26" height="28" viewBox="0 0 26 28" ><defs><linearGradient id="rg3" x1="0" x2="0" y1="0" y2="1"><stop offset="0" stop-color="#4a4a4a"/><stop offset="1" stop-color="#2b2b2b"/></linearGradient></defs><ellipse cx="11.8" cy="21.5" rx="6" ry="2.2" fill="rgba(0,0,0,0.22)"/><circle cx="11.6" cy="11.8" r="10.4" fill="#1e1e1e"/><circle cx="11.6" cy="11.8" r="8.9" fill="url(#rg3)"/><circle cx="11.6" cy="11.8" r="4" fill="none" stroke="#c4512e" stroke-width="2.5"/></svg>
<div class="a" style="left:152px;top:326px;width:100px;height:22px;background:#262626;"></div>
<div class="a" style="left:157px;top:336px;width:90px;height:2px;background:#060606;"></div>
<svg style="left:208px;top:327px" width="24" height="24" viewBox="0 0 24 24" ><defs><linearGradient id="fgl3" x1="0" x2="1" y1="0" y2="0"><stop offset="0" stop-color="#858585"/><stop offset="0.35" stop-color="#b4b4b4"/><stop offset="0.75" stop-color="#d6d6d6"/><stop offset="0.8" stop-color="#ffffff"/><stop offset="1" stop-color="#ffffff"/></linearGradient><linearGradient id="fgr3" x1="0" x2="1" y1="0" y2="0"><stop offset="0" stop-color="#c6c6c6"/><stop offset="0.5" stop-color="#a6a6a6"/><stop offset="1" stop-color="#bcbcbc"/></linearGradient></defs><rect x="4.5" y="16.5" width="14.5" height="3.3" rx="1.5" fill="rgba(0,0,0,0.45)"/><rect x="4.1" y="1.9" width="7" height="14.9" fill="url(#fgl3)"/><rect x="11.1" y="1.9" width="0.9" height="14.9" fill="#1e1e1e"/><rect x="12" y="1.9" width="6.9" height="14.9" fill="url(#fgr3)"/></svg>
<div class="a" style="left:259px;top:327px;width:34px;height:20px;background:linear-gradient(#353535,#282828);border-radius:2.5px;border:1px solid #222;box-shadow:0 1.5px 1px rgba(0,0,0,0.3)"></div>
<div class="a" style="left:262px;top:330.1px;width:8px;height:3.9px;background:#10c9a0;border-radius:2px"></div>
<div class="a" style="left:272px;top:330.1px;width:8px;height:3.9px;background:#6a6930;border-radius:2px"></div>
<div class="a" style="left:282px;top:330.1px;width:8px;height:3.9px;background:#2e5a76;border-radius:2px"></div>
<div class="t" style="left:263.3px;top:337px;font-size:9px;color:#b4b4b4;font-weight:bold">Route</div>
<div class="a" style="left:152px;top:354px;width:36px;height:20px;background:linear-gradient(#353535,#282828);border-radius:2.5px;border:1px solid #222;box-shadow:0 1.5px 1px rgba(0,0,0,0.3)"></div>
<div class="a" style="left:172px;top:355px;width:1px;height:18px;background:#252525;"></div>
<div class="a" style="left:181px;top:357px;width:3.6px;height:14px;background:#565656;border-radius:2px"></div>
<div class="t" style="left:156.3px;top:359.2px;font-size:9.5px;color:#b8b8b8;font-weight:bold">FX</div>
<div class="a" style="left:195px;top:354px;width:41px;height:20px;background:linear-gradient(#353535,#282828);border-radius:2.5px;border:1px solid #222;box-shadow:0 1.5px 1px rgba(0,0,0,0.3)"></div>
<svg style="left:197px;top:357px" width="16" height="14" viewBox="0 0 16 14" ><path d="M3.5 9.5 L8.6 4.5 L12.5 8.6" fill="none" stroke="#6e6e6e" stroke-width="1.2"/><rect x="2" y="8.2" width="3" height="2.8" fill="#6e6e6e"/><rect x="7.1" y="3" width="3" height="3" fill="#6e6e6e"/><rect x="11" y="7.3" width="3" height="2.8" fill="#6e6e6e"/></svg>
<div class="t" style="left:214.3px;top:360px;font-size:9px;color:#b2b2b2;font-weight:bold">trim</div>
<svg style="left:241px;top:352px" width="24" height="26" viewBox="0 0 24 26" ><ellipse cx="12" cy="13.5" rx="9.5" ry="9.5" fill="rgba(0,0,0,0.25)"/><circle cx="11.8" cy="11.8" r="10" fill="#333333"/><circle cx="11.8" cy="11.8" r="9.4" fill="none" stroke="#2a2a2a" stroke-width="1"/><circle cx="11.8" cy="6" r="1.9" fill="#10c9a0"/><circle cx="11.8" cy="12" r="1.7" fill="#d4d4d4"/></svg>
<div class="t" style="left:152px;top:380px;font-size:9px;color:#8fb070;">0.00dB</div>
<div class="t" style="left:278px;top:382px;font-size:9px;color:#8fb070;">center</div>
<div class="a" style="left:312px;top:293px;width:56px;height:147px;background:#262626;"></div>
<div class="t" style="left:327.9px;top:297.5px;width:200px;margin-left:-100px;text-align:center;font-size:9px;color:#6e6e6e;font-weight:bold;letter-spacing:0.35px">-inf</div>
<div class="t" style="left:327.9px;top:317.5px;width:200px;margin-left:-100px;text-align:center;font-size:9px;color:#6e6e6e;font-weight:bold;letter-spacing:0.35px">-6-</div>
<div class="t" style="left:327.9px;top:342.5px;width:200px;margin-left:-100px;text-align:center;font-size:9px;color:#6e6e6e;font-weight:bold;letter-spacing:0.35px">-18-</div>
<div class="t" style="left:327.9px;top:367.5px;width:200px;margin-left:-100px;text-align:center;font-size:9px;color:#6e6e6e;font-weight:bold;letter-spacing:0.35px">-30-</div>
<div class="t" style="left:327.9px;top:392.5px;width:200px;margin-left:-100px;text-align:center;font-size:9px;color:#6e6e6e;font-weight:bold;letter-spacing:0.35px">-42-</div>
<div class="t" style="left:327.9px;top:418.5px;width:200px;margin-left:-100px;text-align:center;font-size:9px;color:#6e6e6e;font-weight:bold;letter-spacing:0.35px">-54-</div>
<div class="a" style="left:343px;top:296px;width:21px;height:20px;background:#333333;border:1px solid #0c0c0c;box-shadow:0 2px 1px rgba(0,0,0,0.35)"></div>
<div class="t" style="left:353.5px;top:300.5px;width:200px;margin-left:-100px;text-align:center;font-size:11px;color:#c45c4c;">M</div>
<div class="a" style="left:343px;top:318px;width:21px;height:20px;background:#333333;border:1px solid #0c0c0c;box-shadow:0 2px 1px rgba(0,0,0,0.35)"></div>
<div class="t" style="left:353.5px;top:322.5px;width:200px;margin-left:-100px;text-align:center;font-size:11px;color:#c8c04c;">S</div>
<svg style="left:345px;top:418px" width="18" height="18" viewBox="0 0 18 18" ><circle cx="8.8" cy="9" r="7.2" fill="#3e3e3e" stroke="#2a2a2a" stroke-width="1"/><ellipse cx="8.8" cy="9" rx="3.4" ry="3.6" fill="none" stroke="#aeaeae" stroke-width="1.3"/><line x1="5" y1="13" x2="12.6" y2="5" stroke="#aeaeae" stroke-width="1.2"/></svg>
<div class="a" style="left:368px;top:293px;width:68px;height:147px;background:#3c3c3c;"></div>
<svg style="left:130px;top:283px" width="9" height="8" viewBox="0 0 9 8" ><path d="M0.2 0.3 h3.6 l1.6 1.7 h2.4 v5 h-7.6 z" fill="#63b5cd"/></svg>
<svg style="left:0px;top:0px" width="1628" height="832" viewBox="0 0 1628 832" ><g>
<polygon points="383.3,190.1 390,196.8 380.6,205.9 374.2,198.9" fill="#3a3a3a"/>
<polygon points="385.5,192.3 387.7,194.5 378.4,203.7 376.3,201.4" fill="#4a4a4a"/>
<polygon points="397.5,167.5 412.2,182.2 393.9,198.7 380.9,186.7" fill="#434343"/>
<polygon points="397.5,167.5 403.0,173.0 386.0,191.4 380.9,186.7" fill="#4a4a4a"/>
<polygon points="415.0,151.1 428.5,164.3 412.2,182.2 397.5,167.5" fill="#d3d3d3"/>
<polygon points="415.0,151.1 419.5,155.5 402.4,172.4 397.5,167.5" fill="#c6c6c6"/>
<polygon points="424.0,159.9 428.5,164.3 412.2,182.2 407.3,177.3" fill="#e3e3e3"/>
<polygon points="397.5,167.5 412.2,182.2 411.0,183.3 396.4,168.7" fill="#2e2e2e"/>
<line x1="400.6" y1="174.6" x2="404.0" y2="178.0" stroke="#e8e8e8" stroke-width="1.3"/>
</g></svg>
<svg style="left:380px;top:304px" width="44" height="41" viewBox="0 0 44 41" ><rect x="-0.1" y="0.2" width="44.1" height="41" rx="2.5" fill="#343434"/>
<rect x="1.9" y="2.9" width="40.4" height="36.1" fill="#555555"/>
<rect x="1.9" y="2.9" width="40.4" height="26" fill="#4d4d4d"/>
<rect x="4.8" y="5.6" width="34.6" height="22.8" fill="#bcbcbc"/>
<rect x="4.8" y="5.6" width="34.6" height="1.2" fill="#d5d5d5"/>
<path d="M11 29 A 11.5 11.5 0 0 1 33 29 L33 31 L11 31 Z" fill="#4d4d4d"/>
<g stroke="#8a8a8a" stroke-width="0.9" fill="none">
<line x1="8.5" y1="12.5" x2="11" y2="17"/><line x1="12.5" y1="10.8" x2="14" y2="14.6"/><line x1="16" y1="9.6" x2="17" y2="13.2"/><line x1="19.3" y1="9" x2="19.8" y2="12.6"/><line x1="22.3" y1="8.8" x2="22.3" y2="13.6" stroke-width="1.4"/><line x1="25.3" y1="9" x2="24.8" y2="12.6"/><line x1="28.5" y1="9.6" x2="27.5" y2="13.2"/><line x1="32" y1="10.8" x2="30.5" y2="14.6"/><line x1="36" y1="12.5" x2="33.5" y2="17"/>
</g>
<rect x="18.2" y="18.3" width="7.3" height="2.5" fill="#9a9a9a"/>
<line x1="27.3" y1="24.4" x2="34.7" y2="7.4" stroke="#2e2e2e" stroke-width="1.2"/>
<circle cx="22" cy="32.2" r="4.4" fill="#b9b9b9"/><rect x="21.3" y="28.8" width="1.5" height="3" fill="#8a8a8a"/></svg>
<svg style="left:208px;top:195px" width="14" height="20" viewBox="0 0 14 20" ><path d="M0.6 0.9 L0.6 14.4 L3.8 11.6 L6.3 16.6 L8.5 15.5 L6.1 10.7 L10.5 10.5 Z" fill="#050505" stroke="#ffffff" stroke-width="1.1" stroke-linejoin="round"/></svg>
<!-- 60_arrange.py -->
<div class="a" style="left:445px;top:145px;width:1183px;height:295px;background:#7b7d7c;"></div>
<div class="a" style="left:445px;top:440px;width:1183px;height:1px;background:#858586;"></div>
<div class="a" style="left:445px;top:159px;width:1183px;height:5px;background:#ffffff;"></div>
<div class="a" style="left:445px;top:164px;width:1183px;height:125px;background:#60cbec;"></div>
<div class="a" style="left:445px;top:289px;width:1183px;height:2px;background:#dfe6e8;"></div>
<svg style="left:445px;top:164px" width="8" height="8" viewBox="0 0 8 8" ><polygon points="0,0 6,0 0,6" fill="#a5e0f3"/></svg>
<svg style="left:445px;top:281px" width="8" height="8" viewBox="0 0 8 8" ><polygon points="0,2 6,8 0,8" fill="#a5e0f3"/></svg>
<svg style="left:0px;top:0px" width="1628" height="832" viewBox="0 0 1628 832" ><polygon points="445.0,224.1 460.2,224.0 462.2,218.3 464.6,220.9 465.9,209.7 467.5,179.0 469.5,204.4 471.2,213.6 472.1,197.1 474.8,197.1 476.7,213.6 478.1,216.3 479.6,209.0 481.4,212.3 484.7,221.6 486.7,223.8 495.9,223.8 496.3,222.9 497.2,209.7 498.6,199.1 499.9,203.1 501.6,195.1 503.4,189.2 505.2,204.4 506.5,215.0 507.8,211.0 509.8,212.3 511.8,213.6 513.8,222.2 515.1,223.8 516.4,220.9 518.4,218.3 520.4,218.9 522.4,206.4 523.7,207.0 525.4,204.1 527.2,208.3 529.6,200.1 531.6,209.7 533.3,216.3 535.3,209.7 537.3,204.1 539.5,213.6 542.2,218.3 544.2,219.6 546.6,207.0 548.8,215.0 550.8,215.0 553.4,209.0 555.8,215.6 558.1,214.3 560.3,218.9 562.7,216.3 565.1,216.3 567.4,210.1 569.3,217.6 570.9,215.0 572.6,216.3 574.6,209.0 576.6,212.3 578.6,212.0 581.2,215.0 583.8,213.0 585.8,218.9 587.8,208.1 589.4,217.6 591.1,215.0 593.1,217.6 595.1,212.3 597.3,211.3 599.7,216.3 603.3,212.0 606.0,216.3 608.2,223.6 610.6,216.3 612.6,212.3 614.3,203.1 616.1,213.6 617.9,205.0 619.8,218.9 621.8,212.0 624.1,221.6 627.1,209.7 629.8,218.9 632.8,202.1 635.4,220.2 637.7,216.3 640.3,209.7 643.0,213.0 646.0,220.9 649.2,205.7 650.5,216.3 652.9,205.0 654.5,207.0 656.2,220.2 658.2,216.3 660.6,215.0 662.4,206.0 664.8,218.9 666.5,209.0 668.8,216.3 670.1,218.9 672.5,212.0 674.3,214.3 676.4,221.6 678.8,208.1 680.9,215.0 683.3,220.9 686.6,223.8 688.9,223.6 691.0,214.3 692.6,213.6 695.2,191.8 697.2,213.6 698.5,206.0 701.2,215.0 702.9,216.3 705.1,211.0 707.4,201.1 709.5,205.0 711.7,222.9 713.7,215.6 717.0,213.4 719.7,215.0 723.2,208.1 726.3,215.6 729.9,213.0 732.2,215.6 734.9,215.6 738.6,208.1 741.2,219.6 744.4,206.0 746.5,213.6 749.2,209.0 751.4,215.0 753.7,209.9 755.0,216.3 757.0,215.0 759.6,204.1 761.6,216.3 762.9,209.0 764.5,216.3 766.2,211.0 768.2,220.2 769.8,216.3 772.2,200.1 774.6,215.0 776.2,211.7 778.1,211.0 779.5,221.6 781.7,200.1 783.8,212.3 785.4,209.0 787.8,213.6 789.6,215.0 792.3,203.1 794.4,215.0 795.7,221.6 797.6,212.0 800.6,213.0 803.3,216.9 806.3,202.1 808.6,215.0 809.9,213.4 812.5,219.6 814.5,220.9 816.1,223.8 825.1,223.8 826.1,222.9 827.5,223.8 829.0,222.9 830.4,212.3 831.7,209.7 833.5,195.1 835.4,213.6 837.0,203.1 839.0,215.0 841.0,211.0 842.3,215.0 844.3,206.0 846.2,217.6 848.2,209.7 850.2,208.1 852.6,215.6 856.2,209.0 858.1,215.0 860.1,211.0 862.1,221.6 864.5,203.1 866.3,218.9 868.1,209.7 870.3,201.1 872.4,215.0 874.0,220.9 876.0,217.6 878.0,216.9 880.0,220.2 881.7,223.8 897.8,223.8 898.5,222.9 899.8,218.3 901.1,222.2 902.8,209.7 905.5,201.1 907.3,212.3 909.0,205.7 910.0,200.4 911.3,197.1 913.7,215.0 915.0,209.7 916.9,199.1 919.0,213.6 920.8,220.9 923.2,223.8 933.8,223.8 934.5,220.2 936.4,201.1 937.5,203.1 939.4,185.9 941.5,183.2 943.3,207.0 944.6,212.3 947.7,210.1 949.7,217.6 951.7,222.2 953.0,223.8 954.3,221.6 956.3,216.3 957.9,216.3 960.5,201.1 962.2,205.0 964.0,208.3 965.5,185.9 967.4,176.0 969.2,207.0 970.8,216.3 972.4,209.7 974.4,197.1 976.4,212.3 978.1,213.6 979.7,206.0 981.8,220.9 984.7,201.1 986.7,213.6 988.0,220.2 990.0,207.0 992.0,204.1 994.0,215.0 996.9,207.0 999.3,220.2 1001.2,212.3 1003.2,211.3 1005.5,212.3 1007.2,217.6 1009.4,210.1 1011.6,218.9 1013.5,204.1 1015.4,209.7 1017.8,210.1 1020.0,206.0 1021.5,216.3 1022.7,206.0 1024.4,215.0 1026.4,198.0 1028.3,217.6 1030.3,209.0 1032.3,217.6 1035.0,206.0 1037.2,220.2 1038.9,207.0 1040.6,202.1 1042.6,205.0 1044.9,218.9 1046.9,223.6 1048.6,215.0 1050.4,204.4 1052.4,196.2 1054.4,213.6 1056.1,203.1 1057.8,218.9 1059.7,208.1 1061.8,220.2 1064.0,201.7 1067.0,218.9 1068.3,215.0 1070.3,200.1 1072.7,220.2 1074.9,211.0 1076.6,215.0 1078.2,208.1 1079.8,213.6 1081.1,211.0 1083.5,220.9 1086.2,209.0 1087.5,215.0 1088.8,203.1 1090.5,197.1 1092.4,217.6 1094.8,213.6 1096.7,212.3 1099.1,206.0 1100.7,216.3 1102.7,209.0 1104.7,218.9 1107.3,205.0 1108.9,207.0 1110.6,209.7 1111.9,220.2 1113.3,207.7 1115.2,205.0 1117.0,220.2 1118.3,214.3 1120.3,220.9 1121.9,223.8 1123.8,223.6 1125.2,216.3 1127.1,205.7 1129.1,197.1 1130.9,213.6 1132.7,203.1 1134.8,212.3 1136.4,207.0 1138.4,196.4 1140.6,184.9 1143.0,196.4 1144.3,221.6 1146.3,215.0 1148.6,211.3 1151.0,216.3 1153.3,208.3 1155.6,201.1 1157.6,209.7 1159.3,207.0 1160.9,215.0 1162.6,210.1 1164.4,215.0 1167.1,208.1 1169.2,216.3 1171.4,206.0 1173.7,220.2 1176.7,206.0 1178.7,215.0 1180.7,206.0 1182.4,206.0 1184.3,218.9 1186.7,211.0 1189.0,215.0 1191.7,206.0 1193.5,212.3 1195.6,208.1 1197.5,215.0 1198.8,210.1 1200.9,220.2 1202.5,207.0 1204.1,201.1 1205.8,209.7 1207.8,207.0 1209.8,212.3 1211.5,222.9 1213.4,203.1 1215.1,199.1 1216.8,213.6 1219.0,211.0 1220.0,212.3 1222.0,215.0 1224.6,197.1 1226.9,216.3 1229.3,207.0 1230.8,215.0 1232.6,209.0 1234.8,213.6 1236.5,209.7 1238.5,197.1 1240.5,208.3 1242.5,209.0 1243.8,215.0 1245.4,211.0 1247.1,218.9 1249.1,223.8 1259.7,223.8 1260.3,221.6 1262.0,215.6 1263.2,213.6 1264.6,204.1 1266.5,216.3 1268.5,198.0 1270.5,216.3 1272.9,209.7 1275.3,206.0 1278.2,210.3 1280.8,213.6 1283.2,217.6 1284.8,209.7 1286.1,207.0 1287.7,208.3 1289.4,217.6 1290.7,218.9 1292.7,200.1 1294.3,212.3 1295.6,205.0 1297.4,208.3 1299.1,208.3 1300.7,219.6 1302.6,218.3 1304.6,216.3 1306.6,220.9 1308.3,223.8 1343.0,223.8 1344.0,222.2 1345.4,218.3 1346.9,220.9 1348.3,209.7 1349.6,202.1 1350.9,204.4 1352.6,215.0 1353.8,205.0 1355.5,205.0 1357.3,208.3 1358.6,213.6 1360.4,204.1 1362.1,211.0 1363.9,217.6 1365.5,221.6 1366.8,223.8 1372.7,223.8 1373.4,221.6 1375.0,208.3 1376.3,209.7 1378.3,200.4 1380.3,195.1 1382.3,212.3 1384.3,212.3 1387.6,210.1 1389.8,218.9 1391.1,216.3 1392.9,203.1 1394.6,208.3 1396.4,205.0 1397.7,218.9 1399.9,200.1 1401.7,208.3 1403.4,217.6 1405.4,215.0 1407.8,203.1 1410.0,215.0 1412.0,210.1 1414.4,220.9 1417.3,204.1 1419.3,212.3 1421.3,221.6 1422.9,208.3 1424.9,204.1 1426.8,215.0 1429.5,210.1 1431.9,216.3 1433.8,215.0 1435.8,213.6 1437.8,210.1 1438.7,212.3 1440.5,217.6 1442.4,213.0 1444.4,217.6 1446.7,203.1 1448.8,213.6 1450.4,210.1 1451.7,215.0 1453.0,211.0 1454.3,216.3 1455.9,212.0 1457.6,217.6 1459.6,206.0 1461.6,216.3 1463.3,215.0 1464.9,218.9 1467.6,212.0 1469.5,220.2 1470.9,212.3 1472.6,209.0 1474.8,212.3 1476.8,218.9 1478.1,223.2 1481.8,223.2 1483.4,215.0 1485.0,207.0 1486.7,201.1 1488.7,215.0 1490.0,207.0 1491.4,209.7 1493.0,220.2 1494.7,211.0 1496.7,218.9 1498.2,215.0 1500.0,210.1 1502.6,220.9 1504.3,215.0 1506.3,208.1 1508.6,218.9 1510.9,212.3 1513.2,209.0 1515.8,211.0 1519.1,221.6 1521.5,211.0 1523.4,213.6 1525.5,205.0 1527.7,220.2 1529.7,214.3 1531.7,214.3 1533.7,211.3 1535.4,216.3 1537.4,210.1 1539.4,216.3 1541.4,220.2 1543.6,204.1 1545.4,208.3 1547.1,217.6 1548.7,213.6 1550.4,206.0 1552.6,216.3 1554.6,218.3 1556.3,223.8 1560.6,223.8 1562.1,215.0 1563.5,216.3 1565.5,194.1 1567.2,218.9 1568.8,207.0 1570.5,218.9 1571.8,209.7 1573.4,195.1 1575.1,200.4 1577.1,199.1 1578.8,212.3 1580.4,222.2 1582.0,215.0 1584.4,211.0 1586.3,217.6 1589.0,213.6 1591.6,207.0 1593.4,207.0 1595.6,210.1 1598.2,212.0 1600.2,217.6 1602.6,213.0 1604.5,218.9 1606.2,214.3 1608.8,208.1 1610.8,220.2 1613.5,206.0 1616.1,215.0 1619.1,208.1 1621.7,216.3 1624.7,209.0 1626.7,213.6 1628.0,210.1 1630.0,210.1 1630.0,236.1 1628.0,236.1 1626.7,234.8 1624.7,238.8 1621.7,232.1 1619.1,235.5 1616.1,232.1 1613.5,240.7 1610.8,229.5 1608.8,242.5 1606.2,232.1 1604.5,229.5 1602.6,230.8 1600.2,232.1 1598.2,236.1 1595.6,237.4 1593.4,239.8 1591.6,238.1 1589.0,237.4 1586.3,233.5 1584.4,236.1 1582.0,237.4 1580.4,226.9 1578.8,238.8 1577.1,250.0 1575.1,245.4 1573.4,253.0 1571.8,244.0 1570.5,232.1 1568.8,248.0 1567.2,236.1 1565.5,258.9 1563.5,233.5 1562.1,232.1 1560.6,224.6 1556.3,224.6 1554.6,228.2 1552.6,229.5 1550.4,233.5 1548.7,234.8 1547.1,230.8 1545.4,238.8 1543.6,246.0 1541.4,229.5 1539.4,232.1 1537.4,233.5 1535.4,232.1 1533.7,238.8 1531.7,232.1 1529.7,232.8 1527.7,229.5 1525.5,238.1 1523.4,234.8 1521.5,234.8 1519.1,226.9 1515.8,236.1 1513.2,240.7 1510.9,236.1 1508.6,229.5 1506.3,236.8 1504.3,233.5 1502.6,228.2 1500.0,234.1 1498.2,232.1 1496.7,229.5 1494.7,236.1 1493.0,228.2 1491.4,236.1 1490.0,236.1 1488.7,234.8 1486.7,240.7 1485.0,238.8 1483.4,230.8 1481.8,225.5 1478.1,225.5 1476.8,228.2 1474.8,236.1 1472.6,243.8 1470.9,236.1 1469.5,228.2 1467.6,236.8 1464.9,229.5 1463.3,230.8 1461.6,229.5 1459.6,234.8 1457.6,230.8 1455.9,234.8 1454.3,232.1 1453.0,236.1 1451.7,233.5 1450.4,238.8 1448.8,234.8 1446.7,238.8 1444.4,229.5 1442.4,234.8 1440.5,230.8 1438.7,242.7 1437.8,238.8 1435.8,233.5 1433.8,232.1 1431.9,232.1 1429.5,235.5 1426.8,236.1 1424.9,242.5 1422.9,236.1 1421.3,226.9 1419.3,236.1 1417.3,238.8 1414.4,228.2 1412.0,239.4 1410.0,233.5 1407.8,240.1 1405.4,233.5 1403.4,232.1 1401.7,238.8 1399.9,243.4 1397.7,229.5 1396.4,250.0 1394.6,241.4 1392.9,242.1 1391.1,232.1 1389.8,228.2 1387.6,232.1 1384.3,234.8 1382.3,238.8 1380.3,250.7 1378.3,244.0 1376.3,236.1 1375.0,236.1 1373.4,226.9 1372.7,224.6 1366.8,224.6 1365.5,226.2 1363.9,229.5 1362.1,236.1 1360.4,242.5 1358.6,236.1 1357.3,239.4 1355.5,240.1 1353.8,242.1 1352.6,238.8 1350.9,246.7 1349.6,245.1 1348.3,236.1 1346.9,226.9 1345.4,230.8 1344.0,226.2 1343.0,224.6 1308.3,224.6 1306.6,226.9 1304.6,229.5 1302.6,230.8 1300.7,228.8 1299.1,240.1 1297.4,241.4 1295.6,242.5 1294.3,238.8 1292.7,240.1 1290.7,229.5 1289.4,232.1 1287.7,241.4 1286.1,246.0 1284.8,241.4 1283.2,233.5 1280.8,237.4 1278.2,239.4 1275.3,242.5 1272.9,238.8 1270.5,232.1 1268.5,242.5 1266.5,230.8 1264.6,245.1 1263.2,236.1 1262.0,232.1 1260.3,226.9 1259.7,224.6 1249.1,224.6 1247.1,228.2 1245.4,234.8 1243.8,232.1 1242.5,235.5 1240.5,236.1 1238.5,249.1 1236.5,238.8 1234.8,234.8 1232.6,236.8 1230.8,232.1 1229.3,236.1 1226.9,232.1 1224.6,239.8 1222.0,233.5 1220.0,236.1 1219.0,239.4 1216.8,237.4 1215.1,246.0 1213.4,238.8 1211.5,226.9 1209.8,236.1 1207.8,241.4 1205.8,244.0 1204.1,248.0 1202.5,241.4 1200.9,228.2 1198.8,233.5 1197.5,232.1 1195.6,234.8 1193.5,233.5 1191.7,238.8 1189.0,234.8 1186.7,236.1 1184.3,232.1 1182.4,236.1 1180.7,238.8 1178.7,232.1 1176.7,240.7 1173.7,229.5 1171.4,243.8 1169.2,232.1 1167.1,234.8 1164.4,233.5 1162.6,237.4 1160.9,234.8 1159.3,245.1 1157.6,237.4 1155.6,240.7 1153.3,238.8 1151.0,233.5 1148.6,238.1 1146.3,232.1 1144.3,226.9 1143.0,240.1 1140.6,248.0 1138.4,246.0 1136.4,236.1 1134.8,232.1 1132.7,241.4 1130.9,236.1 1129.1,245.1 1127.1,238.8 1125.2,230.8 1123.8,224.9 1121.9,224.7 1120.3,226.9 1118.3,232.1 1117.0,230.8 1115.2,236.1 1113.3,237.4 1111.9,229.5 1110.6,244.0 1108.9,245.4 1107.3,249.1 1104.7,229.5 1102.7,238.8 1100.7,232.1 1099.1,243.8 1096.7,236.1 1094.8,233.5 1092.4,229.5 1090.5,244.7 1088.8,244.0 1087.5,230.8 1086.2,238.8 1083.5,229.5 1081.1,240.7 1079.8,236.1 1078.2,243.8 1076.6,236.1 1074.9,236.1 1072.7,228.2 1070.3,246.0 1068.3,236.1 1067.0,229.5 1064.0,250.0 1061.8,229.5 1059.7,248.0 1057.8,229.5 1056.1,243.8 1054.4,236.1 1052.4,245.1 1050.4,241.4 1048.6,233.5 1046.9,225.3 1044.9,229.5 1042.6,244.0 1040.6,256.0 1038.9,244.0 1037.2,228.2 1035.0,242.1 1032.3,230.8 1030.3,232.1 1028.3,228.2 1026.4,238.1 1024.4,230.8 1022.7,238.8 1021.5,232.1 1020.0,237.4 1017.8,236.8 1015.4,236.1 1013.5,238.5 1011.6,229.5 1009.4,240.7 1007.2,232.1 1005.5,236.8 1003.2,236.1 1001.2,237.4 999.3,229.5 996.9,240.7 994.0,238.8 992.0,246.7 990.0,245.4 988.0,229.5 986.7,236.1 984.7,245.6 981.8,228.2 979.7,237.4 978.1,239.4 976.4,237.4 974.4,250.0 972.4,240.1 970.8,233.5 969.2,244.0 967.4,264.9 965.5,249.3 964.0,238.8 962.2,248.0 960.5,254.0 957.9,229.5 956.3,230.8 954.3,226.9 953.0,224.6 951.7,226.2 949.7,228.2 947.7,232.1 944.6,238.8 943.3,244.0 941.5,261.0 939.4,244.0 937.5,238.8 936.4,238.8 934.5,228.2 933.8,224.6 923.2,224.6 920.8,227.5 919.0,233.5 916.9,243.4 915.0,236.1 913.7,232.1 911.3,246.0 910.0,245.4 909.0,241.4 907.3,233.5 905.5,248.7 902.8,236.1 901.1,226.9 899.8,230.8 898.5,225.5 897.8,224.6 881.7,224.6 880.0,227.5 878.0,229.5 876.0,230.6 874.0,228.2 872.4,236.1 870.3,246.7 868.1,238.8 866.3,229.5 864.5,242.1 862.1,226.9 860.1,236.1 858.1,233.5 856.2,237.4 852.6,233.5 850.2,238.8 848.2,236.8 846.2,232.1 844.3,246.7 842.3,236.1 841.0,240.1 839.0,233.5 837.0,238.1 835.4,232.1 833.5,247.8 831.7,236.1 830.4,234.8 829.0,225.5 827.5,224.6 826.1,225.8 825.1,224.6 816.1,224.6 814.5,226.9 812.5,228.8 809.9,232.1 808.6,233.5 806.3,244.7 803.3,230.8 800.6,232.1 797.6,232.1 795.7,228.2 794.4,232.1 792.3,235.5 789.6,232.1 787.8,236.1 785.4,243.4 783.8,238.8 781.7,246.7 779.5,226.9 778.1,236.8 776.2,240.1 774.6,236.1 772.2,243.8 769.8,232.1 768.2,228.2 766.2,232.8 764.5,230.8 762.9,232.8 761.6,232.1 759.6,240.7 757.0,232.1 755.0,232.1 753.7,235.5 751.4,232.1 749.2,236.8 746.5,232.1 744.4,238.1 741.2,228.2 738.6,239.8 734.9,230.8 732.2,234.8 729.9,233.5 726.3,234.8 723.2,235.9 719.7,232.1 717.0,234.8 713.7,232.1 711.7,225.5 709.5,238.8 707.4,236.8 705.1,234.8 702.9,230.8 701.2,232.1 698.5,238.8 697.2,238.8 695.2,246.7 692.6,232.1 691.0,230.8 688.9,224.9 686.6,224.9 683.3,227.5 680.9,232.1 678.8,234.8 676.4,226.9 674.3,240.1 672.5,243.4 670.1,228.8 668.8,231.5 666.5,235.5 664.8,228.2 662.4,242.1 660.6,233.5 658.2,230.8 656.2,228.2 654.5,238.8 652.9,242.1 650.5,233.5 649.2,240.1 646.0,228.2 643.0,237.4 640.3,239.4 637.7,232.1 635.4,228.2 632.8,239.8 629.8,229.5 627.1,240.7 624.1,226.9 621.8,242.1 619.8,228.2 617.9,241.4 616.1,233.5 614.3,240.7 612.6,237.4 610.6,232.1 608.2,224.9 606.0,233.5 603.3,234.8 599.7,232.1 597.3,238.1 595.1,236.1 593.1,228.2 591.1,230.8 589.4,229.5 587.8,234.1 585.8,229.5 583.8,232.8 581.2,232.1 578.6,236.1 576.6,232.8 574.6,233.5 572.6,232.1 570.9,231.5 569.3,230.8 567.4,239.8 565.1,229.5 562.7,230.2 560.3,228.2 558.1,232.1 555.8,231.5 553.4,235.9 550.8,228.8 548.8,230.8 546.6,236.8 544.2,229.5 542.2,231.5 539.5,233.5 537.3,238.8 535.3,233.5 533.3,232.1 531.6,238.8 529.6,244.7 527.2,241.4 525.4,250.0 523.7,241.4 522.4,238.8 520.4,229.5 518.4,228.8 516.4,226.9 515.1,224.6 513.8,225.5 511.8,229.5 509.8,232.1 507.8,235.5 506.5,233.5 505.2,244.0 503.4,254.6 501.6,244.0 499.9,241.4 498.6,242.1 497.2,236.1 496.3,225.5 495.9,224.6 486.7,224.6 484.7,226.9 481.4,233.5 479.6,235.5 478.1,232.1 476.7,236.1 474.8,255.3 472.1,254.6 471.2,236.1 469.5,249.3 467.5,261.0 465.9,236.1 464.6,226.9 462.2,229.5 460.2,224.5 445.0,224.3" fill="#416b7b" stroke="#416b7b" stroke-width="0.5" stroke-linejoin="round"/></svg>
<div class="a" style="left:445px;top:224px;width:1183px;height:1px;background:#416b7b;"></div>
<div class="a" style="left:445px;top:242px;width:1183px;height:1.3px;background:#7d0f12;"></div>
<div class="a" style="left:446px;top:146px;width:13px;height:12px;background:#909291;"></div>
<div class="a" style="left:461px;top:146px;width:13px;height:12px;background:#909291;"></div>
<div class="a" style="left:476px;top:146px;width:13px;height:12px;background:#909291;"></div>
<div class="a" style="left:491px;top:146px;width:13px;height:12px;background:#909291;"></div>
<svg style="left:446px;top:146px" width="13" height="12" viewBox="0 0 13 12" ><rect x="3" y="6" width="7.2" height="4" fill="#646665"/><path d="M4.4 6 V4.9 a2.2 2.2 0 0 1 4.4 0 V6" fill="none" stroke="#646665" stroke-width="1.2"/></svg>
<div class="t" style="left:462.6px;top:146.6px;font-size:11px;color:#646665;">M</div>
<div class="t" style="left:477.2px;top:146.6px;font-size:11px;color:#646665;letter-spacing:-1.6px">FX</div>
<svg style="left:491px;top:146px" width="13" height="12" viewBox="0 0 13 12" ><path d="M2 9.5 L6 4 L11 6.5" fill="none" stroke="#646665" stroke-width="1.2"/><rect x="1" y="8" width="2.6" height="2.6" fill="#646665"/><rect x="4.7" y="2.7" width="2.6" height="2.6" fill="#646665"/><rect x="9.4" y="5.2" width="2.6" height="2.6" fill="#646665"/></svg>
<div class="t" style="left:508.3px;top:145.9px;font-size:11px;color:#cfcfcf;">[-2.57dB] Звук 6.wav</div>
</div></body></html>
